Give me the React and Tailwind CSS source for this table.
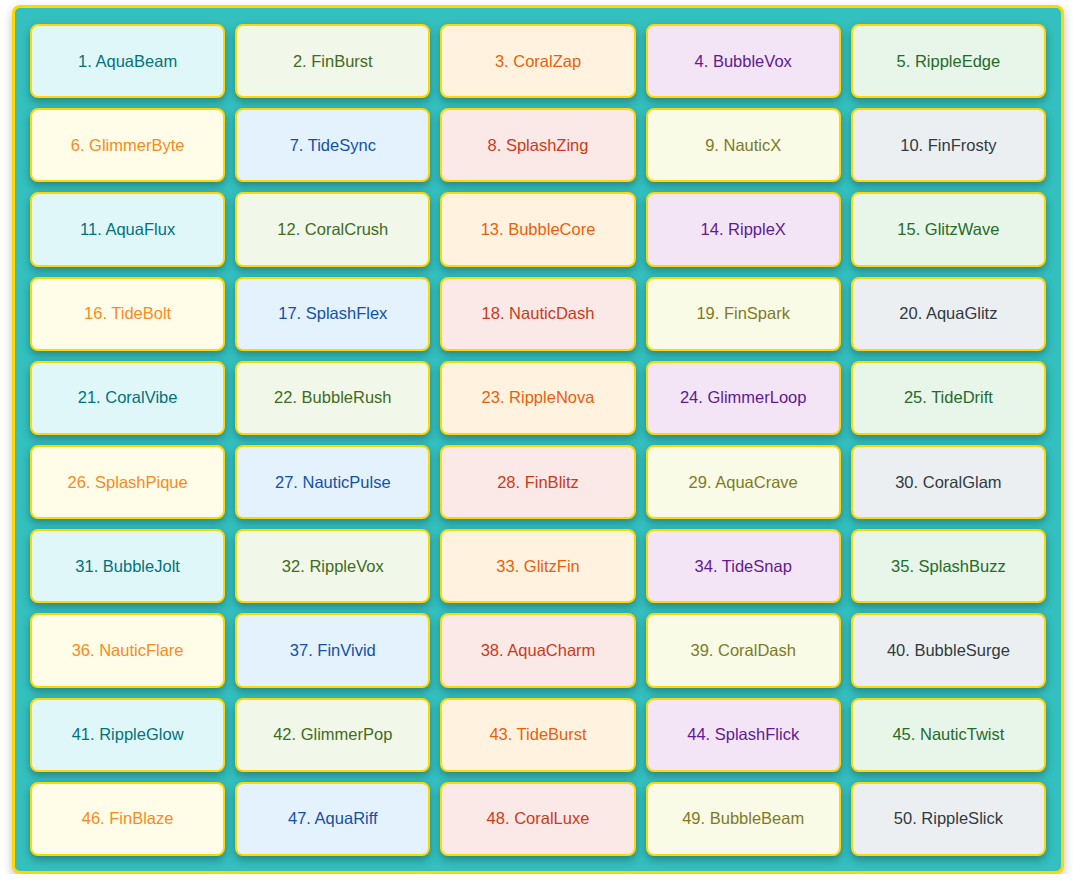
import React from "react";

const names = [
  "AquaBeam", "FinBurst", "CoralZap", "BubbleVox", "RippleEdge",
  "GlimmerByte", "TideSync", "SplashZing", "NauticX", "FinFrosty",
  "AquaFlux", "CoralCrush", "BubbleCore", "RippleX", "GlitzWave",
  "TideBolt", "SplashFlex", "NauticDash", "FinSpark", "AquaGlitz",
  "CoralVibe", "BubbleRush", "RippleNova", "GlimmerLoop", "TideDrift",
  "SplashPique", "NauticPulse", "FinBlitz", "AquaCrave", "CoralGlam",
  "BubbleJolt", "RippleVox", "GlitzFin", "TideSnap", "SplashBuzz",
  "NauticFlare", "FinVivid", "AquaCharm", "CoralDash", "BubbleSurge",
  "RippleGlow", "GlimmerPop", "TideBurst", "SplashFlick", "NauticTwist",
  "FinBlaze", "AquaRiff", "CoralLuxe", "BubbleBeam", "RippleSlick",
];

// ten tints, cycling
const tints = [
  "bg-[#e0f7fa] text-[#00727c]",
  "bg-[#f1f8e9] text-[#3f6b22]",
  "bg-[#fff3e0] text-[#eb5f0a]",
  "bg-[#f3e5f5] text-[#5e1a94]",
  "bg-[#e8f5e9] text-[#256b2a]",
  "bg-[#fffde7] text-[#f88a1e]",
  "bg-[#e3f2fd] text-[#1450a8]",
  "bg-[#fbe9e7] text-[#cc3a17]",
  "bg-[#f9fbe7] text-[#7f7a1f]",
  "bg-[#eceff1] text-[#2f3b42]",
];

export default function App() {
  return (
    <div className="pt-[5px] pl-[12px]" style={{ fontFamily: "'Liberation Sans', Arial, sans-serif" }}>
      <div className="w-[1052px] bg-[#33c0bf] border-[3px] border-[#ffd700] rounded-lg pt-[16px] pb-[15px] px-[15px] shadow-[0_4px_10px_rgba(0,0,0,0.25)]">
        <div className="grid grid-cols-5 gap-[10px]">
          {names.map((name, i) => (
            <div
              key={name}
              className={`h-[74.2px] flex items-center justify-center rounded-lg border-2 border-[#ffd700] text-[16.5px] shadow-[0_4px_8px_rgba(0,0,0,0.3)] ${tints[i % 10]}`}
            >
              {i + 1}. {name}
            </div>
          ))}
        </div>
      </div>
    </div>
  );
}
